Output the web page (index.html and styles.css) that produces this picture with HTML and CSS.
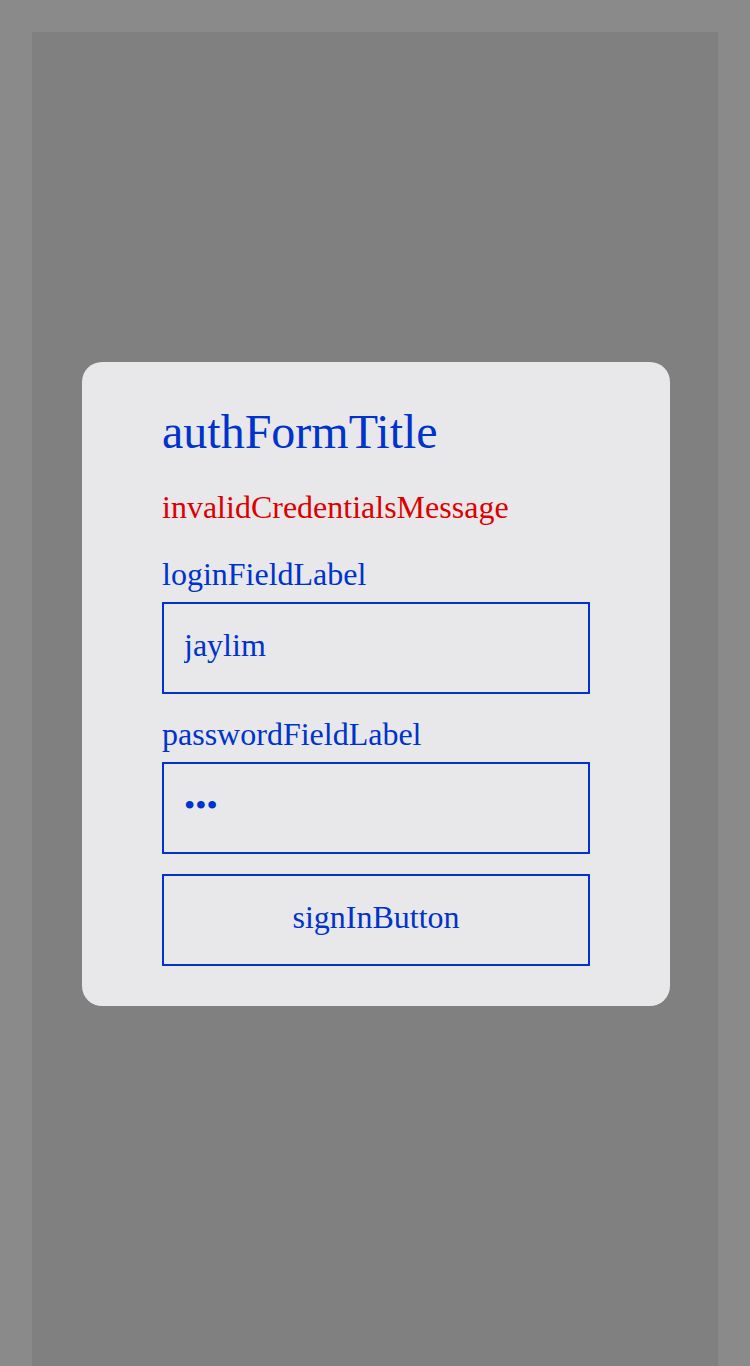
FILE: index.html
```html
<!DOCTYPE html>
<html lang="en">
<head>
<meta charset="utf-8">
<title>authFormTitle</title>
<link rel="stylesheet" href="styles.css">
</head>
<body>
<div class="screen">
  <form class="card" onsubmit="return false;">
    <h1 class="title">authFormTitle</h1>
    <p class="error">invalidCredentialsMessage</p>
    <label class="label" for="login">loginFieldLabel</label>
    <input class="field" id="login" type="text" value="jaylim">
    <label class="label label-second" for="password">passwordFieldLabel</label>
    <input class="field" id="password" type="password" value="abc">
    <button class="submit" type="submit">signInButton</button>
  </form>
</div>
</body>
</html>
```

FILE: styles.css
```css
html, body {
  margin: 0;
  padding: 0;
  background: #8a8a8a;
}

body {
  padding: 32px 32px 0 32px;
  font-family: "Liberation Serif", "Times New Roman", serif;
}

.screen {
  box-sizing: border-box;
  height: 1334px;
  background: #808080;
  display: flex;
  align-items: center;
  justify-content: center;
  padding: 0 0 30px 2px;
}

.card {
  box-sizing: border-box;
  width: 588px;
  height: 644px;
  background: #e8e8eb;
  border-radius: 20px;
  padding: 42px 80px 40px 80px;
  display: flex;
  flex-direction: column;
}

.title {
  margin: 0;
  font-size: 48px;
  line-height: 56px;
  font-weight: normal;
  color: #0033cc;
}

.error {
  margin: 28px 0 0 0;
  font-size: 32px;
  line-height: 38px;
  color: #dd0000;
}

.label {
  display: block;
  margin: 29px 0 9px 0;
  font-size: 32px;
  line-height: 38px;
  color: #0033cc;
}

.label-second {
  margin-top: 21px;
}

.field {
  box-sizing: border-box;
  width: 428px;
  height: 92px;
  margin: 0;
  padding: 0 20px 6px 20px;
  border: 2px solid #0033cc;
  border-radius: 0;
  background: transparent;
  font-family: "Liberation Serif", "Times New Roman", serif;
  font-size: 32px;
  color: #0033cc;
  outline: none;
}

.submit {
  box-sizing: border-box;
  width: 428px;
  height: 92px;
  margin: 20px 0 0 0;
  padding: 0 0 6px 0;
  border: 2px solid #0033cc;
  border-radius: 0;
  background: transparent;
  font-family: "Liberation Serif", "Times New Roman", serif;
  font-size: 32px;
  color: #0033cc;
  cursor: pointer;
}
```
